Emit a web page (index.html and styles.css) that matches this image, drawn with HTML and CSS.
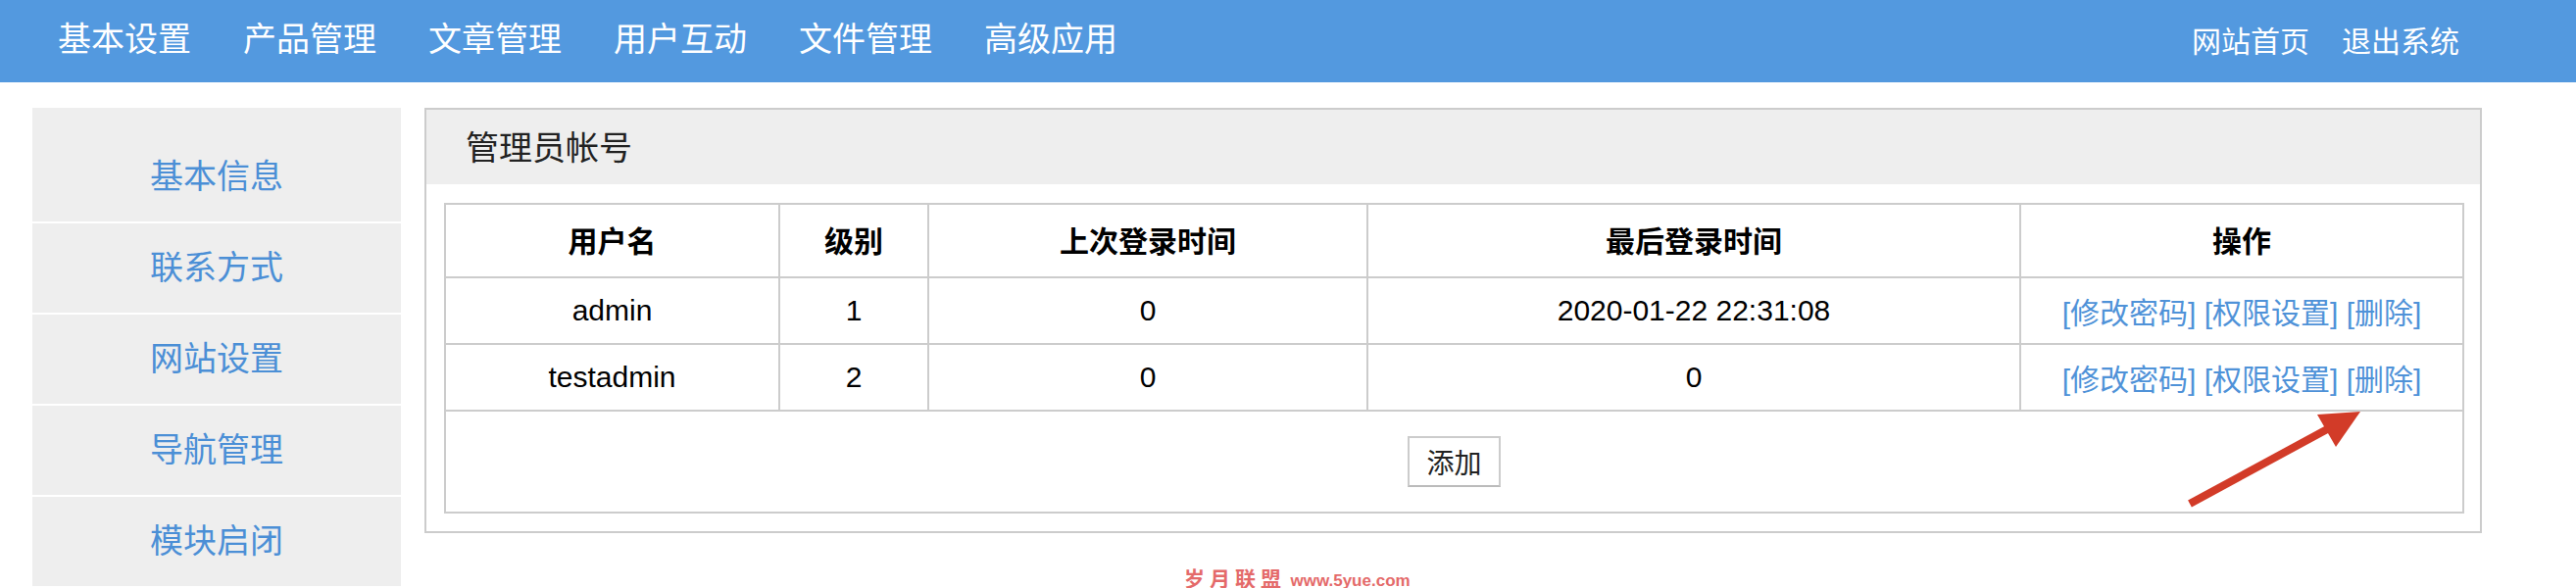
FILE: index.html
```html
<!DOCTYPE html>
<html lang="zh-CN">
<head>
  <meta charset="UTF-8">
  <title>管理员帐号</title>
  <link rel="stylesheet" href="styles.css">
</head>
<body>
  <div class="topbar">
    <ul class="menu">
      <li><a href="#">基本设置</a></li>
      <li><a href="#">产品管理</a></li>
      <li><a href="#">文章管理</a></li>
      <li><a href="#">用户互动</a></li>
      <li><a href="#">文件管理</a></li>
      <li><a href="#">高级应用</a></li>
    </ul>
    <ul class="menu menu-right">
      <li><a href="#">网站首页</a></li>
      <li><a href="#">退出系统</a></li>
    </ul>
  </div>

  <div class="wrap">
    <aside class="sidebar">
      <ul>
        <li><a href="#">基本信息</a></li>
        <li><a href="#">联系方式</a></li>
        <li><a href="#">网站设置</a></li>
        <li><a href="#">导航管理</a></li>
        <li><a href="#">模块启闭</a></li>
        <li class="blank"></li>
      </ul>
    </aside>

    <section class="panel">
      <div class="panel-head">
        <h3>管理员帐号</h3>
      </div>
      <div class="panel-body">
        <table class="grid">
          <colgroup>
            <col class="c-name">
            <col class="c-level">
            <col class="c-prev">
            <col class="c-last">
            <col class="c-ops">
          </colgroup>
          <thead>
            <tr>
              <th>用户名</th>
              <th>级别</th>
              <th>上次登录时间</th>
              <th>最后登录时间</th>
              <th>操作</th>
            </tr>
          </thead>
          <tbody>
            <tr>
              <td>admin</td>
              <td>1</td>
              <td>0</td>
              <td>2020-01-22 22:31:08</td>
              <td class="ops"><a href="#">[修改密码]</a> <a href="#">[权限设置]</a> <a href="#">[删除]</a></td>
            </tr>
            <tr>
              <td>testadmin</td>
              <td>2</td>
              <td>0</td>
              <td>0</td>
              <td class="ops"><a href="#">[修改密码]</a> <a href="#">[权限设置]</a> <a href="#">[删除]</a></td>
            </tr>
            <tr class="foot">
              <td colspan="5"><button class="btn">添加</button></td>
            </tr>
          </tbody>
        </table>
      </div>
    </section>
  </div>

  <!-- annotation arrow pointing at the delete link -->
  <svg class="arrow" width="188" height="106" viewBox="0 0 188 106">
    <line x1="8" y1="100" x2="150" y2="23" stroke="#d23b28" stroke-width="8"/>
    <polygon points="182,6 138,9 157,42" fill="#d23b28"/>
  </svg>

  <div class="watermark"><span class="wm-cn">岁月联盟</span> <span class="wm-en">www.5yue.com</span></div>
</body>
</html>
```

FILE: styles.css
```css
* {
  box-sizing: border-box;
}

body {
  margin: 0;
  background: #ffffff;
  color: #222222;
  font-family: "Liberation Sans", "Noto Sans CJK SC", sans-serif;
  position: relative;
  height: 600px;
  overflow: hidden;
}

ul {
  list-style: none;
  margin: 0;
  padding: 0;
}

a {
  text-decoration: none;
}

/* top navigation */
.topbar {
  height: 84px;
  background: #5399df;
  display: flex;
  justify-content: space-between;
  align-items: center;
  padding: 0 119px 0 59px;
}

.menu {
  display: flex;
  gap: 53px;
  margin-bottom: 8px;
}

.menu a {
  color: #ffffff;
  font-family: "Noto Sans CJK SC", sans-serif;
  font-size: 34px;
  line-height: 40px;
  display: block;
}

.menu-right {
  gap: 33px;
  margin-bottom: 5px;
}

.menu-right a {
  font-size: 30px;
}

/* page body */
.wrap {
  display: flex;
  align-items: flex-start;
  margin: 26px 0 0 33px;
  gap: 24px;
}

.sidebar {
  width: 376px;
  flex: none;
  background: #eeeeee;
  padding-top: 25px;
}

.sidebar li {
  border-bottom: 2px solid #ffffff;
}

.sidebar a {
  display: block;
  height: 91px;
  line-height: 86px;
  text-align: center;
  color: #4b8fd6;
  font-family: "Noto Sans CJK SC", sans-serif;
  font-size: 34px;
}

.sidebar .blank {
  height: 91px;
}

.panel {
  width: 2099px;
  flex: none;
  border: 2px solid #cccccc;
}

.panel-head {
  height: 76px;
  background: #eeeeee;
  padding-left: 40px;
}

.panel-head h3 {
  margin: 0;
  font-family: "Noto Sans CJK SC", sans-serif;
  font-weight: normal;
  font-size: 34px;
  line-height: 74px;
  color: #222222;
}

.panel-body {
  padding: 19px 18px 18px;
}

/* admin table */
.grid {
  width: 100%;
  border-collapse: collapse;
  table-layout: fixed;
  border: 2px solid #cccccc;
}

.c-name { width: 341px; }
.c-level { width: 152px; }
.c-prev { width: 448px; }
.c-last { width: 666px; }
.c-ops { width: 452px; }

.grid th,
.grid td {
  border: 2px solid #cccccc;
  text-align: center;
  padding: 0;
  font-size: 30px;
  color: #000000;
}

.grid th {
  height: 75px;
  padding-bottom: 3px;
  font-weight: bold;
  font-family: "Noto Sans CJK SC", sans-serif;
}

.grid td {
  height: 68px;
}

.grid .ops a {
  color: #4f92d8;
}

.grid .foot td {
  height: 104px;
}

.btn {
  width: 95px;
  height: 52px;
  background: #ffffff;
  border: 2px solid #cccccc;
  border-bottom-color: #bbbbbb;
  font-family: "Noto Sans CJK SC", sans-serif;
  font-size: 28px;
  color: #222222;
  padding: 0;
  cursor: pointer;
}

.arrow {
  position: absolute;
  left: 2226px;
  top: 414px;
}

.watermark {
  position: absolute;
  left: 1208px;
  top: 574px;
  color: #e46a6a;
  white-space: nowrap;
}

.wm-cn {
  font-family: "Noto Sans CJK SC", sans-serif;
  font-size: 21px;
  font-weight: bold;
  letter-spacing: 5px;
}

.wm-en {
  font-family: "Liberation Sans", sans-serif;
  font-size: 17px;
  font-weight: bold;
}
```
